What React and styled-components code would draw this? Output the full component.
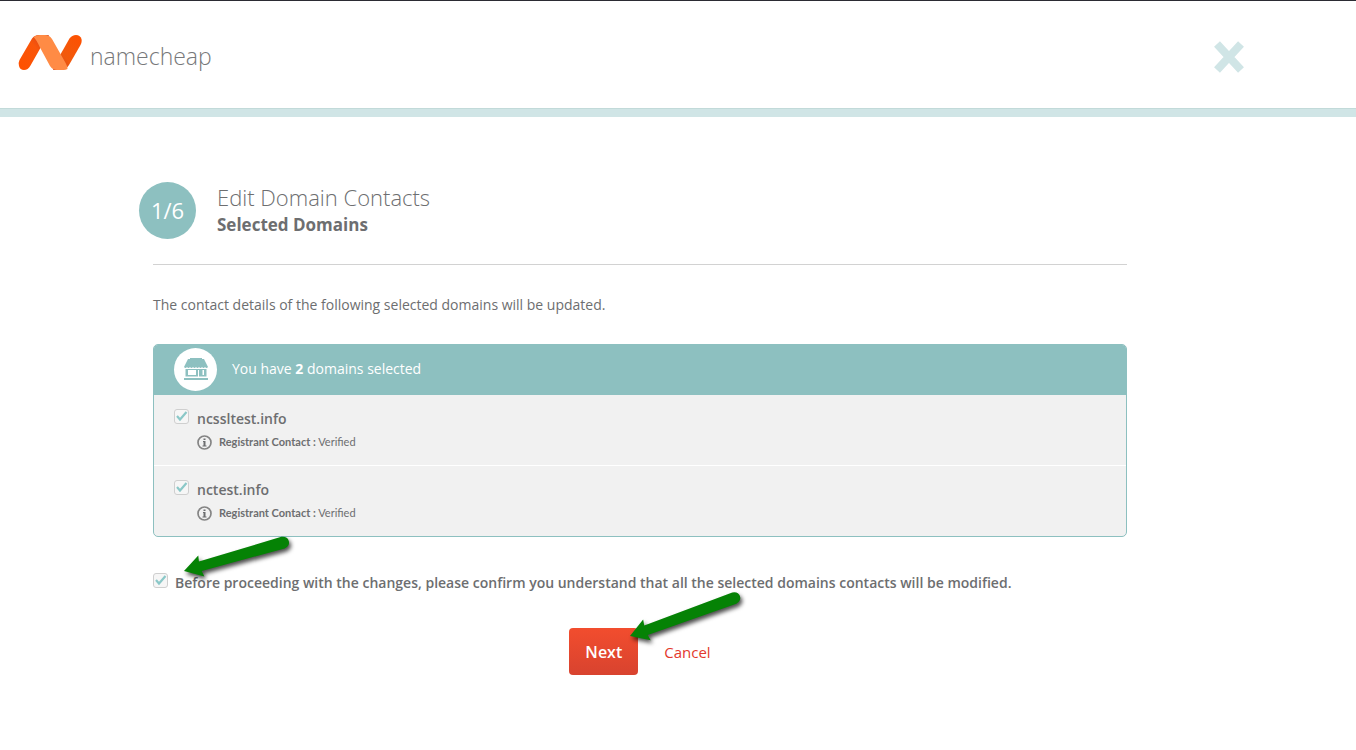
import React, { useState } from "react";
import styled, { createGlobalStyle, ThemeProvider } from "styled-components";

const theme = {
  teal: '#8dc0c0',
  paleTeal: '#d0e5e6',
  text: '#6d6e70',
  red: '#e3392c',
  panel: '#f1f1f1',
}

const GlobalStyle = createGlobalStyle`
  * {
    box-sizing: border-box;
  }
  body {
    margin: 0;
    background: #fff;
    color: ${props => props.theme.text};
    font-family: "Open Sans", "Noto Sans", sans-serif;
    font-size: 14px;
    line-height: 20px;
  }
`

const Header = styled.header`
  display: flex;
  justify-content: space-between;
  align-items: center;
  height: 117px;
  padding: 0 112px 6px 18px;
  border-top: 1px solid #2b2b33;
  border-bottom: 8px solid ${props => props.theme.paleTeal};
  box-shadow: inset 0 -1px 0 #c2dad9;
`

const Logo = styled.a`
  display: flex;
  align-items: center;
  gap: 8px;
  color: #77787a;
  font-size: 23px;
  font-weight: 300;
  line-height: 32px;
  text-decoration: none;
`

const LogoName = styled.span`
  padding-top: 8px;
`

const CloseButton = styled.button`
  display: flex;
  padding: 10px 0 0;
  border: 0;
  background: none;
  cursor: pointer;
`

const Page = styled.div`
  padding: 65px 76px 40px 0;
`

const Main = styled.main`
  max-width: 974px;
  margin: 0 auto;
`

const StepHeader = styled.div`
  display: flex;
  align-items: center;
  gap: 21px;
  margin-left: -14px;
`

const StepCircle = styled.div`
  display: flex;
  align-items: center;
  justify-content: center;
  width: 57px;
  height: 57px;
  padding-bottom: 2px;
  border-radius: 50%;
  background: ${props => props.theme.teal};
  color: #fff;
  font-size: 22px;
`

const Title = styled.h1`
  margin: 0;
  font-size: 22px;
  font-weight: 300;
  line-height: 28px;
`

const Subtitle = styled.h2`
  margin: 0;
  font-size: 17px;
  font-weight: 700;
  line-height: 28px;
`

const Divider = styled.hr`
  margin: 25px 0 30px;
  border: 0;
  border-top: 1px solid #d2d2d2;
`

const Intro = styled.p`
  margin: 0 0 29px;
`

const Panel = styled.section`
  border: 1px solid ${props => props.theme.teal};
  border-radius: 5px;
  background: ${props => props.theme.panel};
  overflow: hidden;
`

const PanelHeader = styled.div`
  display: flex;
  align-items: center;
  gap: 15px;
  height: 50px;
  padding: 0 0 2px 20px;
  background: ${props => props.theme.teal};
  color: #fff;
`

const StoreCircle = styled.span`
  display: flex;
  align-items: center;
  justify-content: center;
  width: 43px;
  height: 43px;
  border-radius: 50%;
  background: #fff;
`

const DomainList = styled.ul`
  margin: 0;
  padding: 0;
  list-style: none;
`

const DomainItem = styled.li`
  padding: 14px 20px;
  & + & {
    border-top: 1px solid #fff;
  }
`

const CheckRow = styled.label`
  position: relative;
  display: flex;
  align-items: flex-start;
  gap: ${props => props.$gap}px;
  font-weight: 600;
  cursor: pointer;
`

const CheckBox = styled.span`
  display: grid;
  width: 15px;
  height: 15px;
  flex: none;
  & > * {
    grid-area: 1 / 1;
  }
`

const CheckInput = styled.input`
  width: 15px;
  height: 15px;
  margin: 0;
  appearance: none;
  border: 1px solid #cfcfcf;
  border-radius: 3px;
  background: #f6f6f6;
`

const ContactRow = styled.div`
  display: flex;
  align-items: center;
  gap: 7px;
  margin-top: 4px;
  padding-left: 23px;
  font-family: Lato, "Open Sans", sans-serif;
  font-size: 11px;
  line-height: 18px;
`

const Confirm = styled.div`
  padding-top: 36px;
`

const Actions = styled.div`
  display: flex;
  justify-content: center;
  align-items: center;
  gap: 26px;
  margin-top: 35px;
`

const NextWrap = styled.div`
  position: relative;
`

const NextButton = styled.button`
  height: 47px;
  padding: 0 16px;
  border: 0;
  border-radius: 4px;
  background: linear-gradient(#f24d2e, #d8432f);
  color: #fff;
  font: 600 16px "Open Sans", sans-serif;
  cursor: pointer;
`

const CancelLink = styled.a`
  color: ${props => props.theme.red};
  font-size: 15px;
  text-decoration: none;
`

const ArrowSvg = styled.svg`
  position: absolute;
  left: ${props => props.$left}px;
  top: ${props => props.$top}px;
  overflow: visible;
  pointer-events: none;
  filter: drop-shadow(2px 3px 2px rgba(0, 0, 0, 0.7));
`

function LogoMark() {
  return (
    <svg width="64" height="35" viewBox="0 0 64 35" aria-hidden="true">
      <defs>
        <linearGradient id="stemLeft" x1="0" y1="1" x2="1" y2="0">
          <stop offset="0" stopColor="#ff5000" />
          <stop offset="0.6" stopColor="#f9560a" />
          <stop offset="1" stopColor="#c93a22" />
        </linearGradient>
        <linearGradient id="stemRight" x1="0" y1="1" x2="1" y2="0">
          <stop offset="0" stopColor="#c93a22" />
          <stop offset="0.4" stopColor="#f15a0d" />
          <stop offset="1" stopColor="#ff5000" />
        </linearGradient>
      </defs>
      <path d="M14 3.500Q16.500 0 21 0H31L23 12L12.500 30.500Q10 35 6 35Q2 35 1 31Q0 28 1.500 25Z" fill="url(#stemLeft)" />
      <path d="M51.500 3.500Q54 0 58 0Q62 0 63.500 4Q64.200 7 62.500 10L51 30Q48 35 43 35H35L41 22Z" fill="url(#stemRight)" />
      <path d="M15.500 2Q18 0 22 0H27Q31.500 0 34 4L46.500 26Q49.500 31 49.500 34Q48 35 45 35H39Q34.500 35 32 31L22 12.500Q18 4 15.500 2Z" fill="#ff8b45" />
    </svg>
  )
}

function StoreIcon() {
  return (
    <svg width="24" height="22" viewBox="0 0 24 22" fill="#8dc0c0" aria-hidden="true">
      <path d="M6 0H18V1H20L24 9Q22.500 11 21 9Q19.500 11 18 9Q16.500 11 15 9Q13.500 11 12 9Q10.500 11 9 9Q7.500 11 6 9Q4.500 11 3 9Q1.500 11 0 9L4 1H6Z" />
      <path fillRule="evenodd" d="M1.500 11H22.500V18.500H1.500ZM4 12V17H12V12ZM14 12V18.500H15V12ZM18.500 12V17H20V12Z" />
      <path d="M0 20H24V22H0Z" />
    </svg>
  )
}

function InfoIcon() {
  return (
    <svg width="15" height="15" viewBox="0 0 15 15" aria-hidden="true">
      <circle cx="7.500" cy="7.500" r="6.500" fill="none" stroke="#858585" strokeWidth="1.700" />
      <path d="M6.500 3.500H8.500V5H6.500ZM6 6H8.500V10.500H9.500V11.500H5.500V10.500H6.500V7H6Z" fill="#6d6e70" />
    </svg>
  )
}

function Arrow({ left, top, angle, length }) {
  const end = length - 6

  return (
    <ArrowSvg $left={left} $top={top} width="110" height="24" aria-hidden="true">
      <path
        transform={`rotate(${angle})`}
        d={`M0 0L18 -11L17 -5L${end} -6Q${length} -5 ${length} 0Q${length} 5 ${end} 6L17 5L18 11Z`}
        fill="#058205"
      />
    </ArrowSvg>
  )
}

function Check({ checked, onChange }) {
  return (
    <CheckBox>
      <CheckInput type="checkbox" checked={checked} onChange={onChange} />
      {checked && (
        <svg width="15" height="15" viewBox="0 0 15 15" pointerEvents="none" aria-hidden="true">
          <path d="M3 7L6 10.500L12.500 3" fill="none" stroke="#8bc8c8" strokeWidth="2.200" />
        </svg>
      )}
    </CheckBox>
  )
}

function Domain({ name, status }) {
  const [checked, setChecked] = useState(true)

  return (
    <DomainItem>
      <CheckRow $gap={8}>
        <Check checked={checked} onChange={() => setChecked(!checked)} />
        <span>{name}</span>
      </CheckRow>
      <ContactRow>
        <InfoIcon />
        <span><b>Registrant Contact :</b> {status}</span>
      </ContactRow>
    </DomainItem>
  )
}

const domains = [
  { name: 'ncssltest.info', status: 'Verified' },
  { name: 'nctest.info', status: 'Verified' },
]

function App() {
  const [confirmed, setConfirmed] = useState(true)

  return (
    <ThemeProvider theme={theme}>
      <GlobalStyle />
      <Header>
        <Logo href="#">
          <LogoMark />
          <LogoName>namecheap</LogoName>
        </Logo>
        <CloseButton type="button" aria-label="Close">
          <svg width="30" height="32" viewBox="0 0 30 32" aria-hidden="true">
            <path d="M3 3L27 29M27 3L3 29" stroke="#d0e5e6" strokeWidth="8" />
          </svg>
        </CloseButton>
      </Header>
      <Page>
        <Main>
          <StepHeader>
            <StepCircle>1/6</StepCircle>
            <div>
              <Title>Edit Domain Contacts</Title>
              <Subtitle>Selected Domains</Subtitle>
            </div>
          </StepHeader>
          <Divider />
          <Intro>The contact details of the following selected domains will be updated.</Intro>
          <Panel>
            <PanelHeader>
              <StoreCircle><StoreIcon /></StoreCircle>
              <span>You have <b>{domains.length}</b> domains selected</span>
            </PanelHeader>
            <DomainList>
              {domains.map(domain => <Domain key={domain.name} {...domain} />)}
            </DomainList>
          </Panel>
          <Confirm>
            <CheckRow $gap={7}>
              <Check checked={confirmed} onChange={() => setConfirmed(!confirmed)} />
              <span>Before proceeding with the changes, please confirm you understand that all the selected domains contacts will be modified.</span>
              <Arrow left={31} top={-2} angle={-16} length={109} />
            </CheckRow>
          </Confirm>
          <Actions>
            <NextWrap>
              <NextButton type="button">Next</NextButton>
              <Arrow left={61} top={8} angle={-20} length={117} />
            </NextWrap>
            <CancelLink href="#">Cancel</CancelLink>
          </Actions>
        </Main>
      </Page>
    </ThemeProvider>
  )
}

export default App;
